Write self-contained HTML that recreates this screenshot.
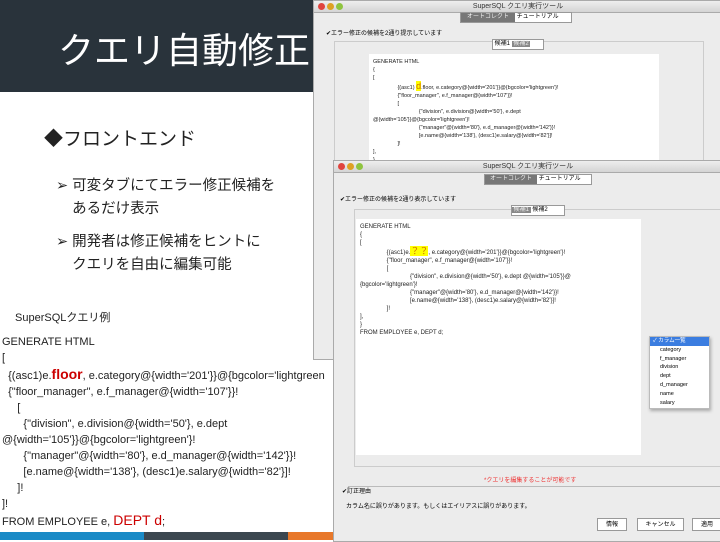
<!DOCTYPE html>
<html><head><meta charset="utf-8"><style>
*{margin:0;padding:0;box-sizing:border-box}
body{width:720px;height:540px;position:relative;overflow:hidden;background:#fff;font-family:"Liberation Sans","Noto Sans CJK JP",sans-serif}
.a{position:absolute}
.hdr{left:0;top:0;width:720px;height:92px;background:#29333b}
.t{color:#fff;font-size:36px;left:58px;top:22px;white-space:nowrap}
.code{font-size:11px;color:#222;line-height:16px;white-space:pre}
.win{background:#ececec;border:1px solid #aaa}
.tb{height:12px;background:linear-gradient(#eee,#d4d4d4);border-bottom:1px solid #aaa;font-size:7px;text-align:center;color:#333;line-height:12px;position:relative}
.dot{position:absolute;top:2px;width:7px;height:7px;border-radius:50%}
.sc{font-size:5.5px;line-height:8px;white-space:pre;color:#222}
.btn{position:absolute;background:#fff;border:1px solid #999;font-size:6px;text-align:center;line-height:12px;height:13px}
.tab{white-space:nowrap;overflow:hidden}
</style></head><body>
<div class="a hdr"></div>
<div class="a t">クエリ自動修正</div>
<div class="a" style="left:44px;top:124px;font-size:19px;color:#222">◆フロントエンド</div>
<div class="a" style="left:56px;top:175px;font-size:14.5px;color:#222;line-height:23px">➢ 可変タブにてエラー修正候補を<br>&nbsp;&nbsp;&nbsp;&nbsp;あるだけ表示</div>
<div class="a" style="left:56px;top:231px;font-size:14.5px;color:#222;line-height:23px">➢ 開発者は修正候補をヒントに<br>&nbsp;&nbsp;&nbsp;&nbsp;クエリを自由に編集可能</div>
<div class="a" style="left:15px;top:309px;font-size:11px;color:#222">SuperSQLクエリ例</div>
<div class="a code" style="left:2px;top:334px">GENERATE HTML
[
  {(asc1)e.<b style="color:#c00;font-size:14px">floor</b>, e.category@{width='201'}}@{bgcolor='lightgreen
  {"floor_manager", e.f_manager@{width='107'}}!
     [
       {"division", e.division@{width='50'}, e.dept
@{width='105'}}@{bgcolor='lightgreen'}!
       {"manager"@{width='80'}, e.d_manager@{width='142'}}!
       [e.name@{width='138'}, (desc1)e.salary@{width='82'}]!
     ]!
]!
FROM EMPLOYEE e, <span style="color:#c00;font-size:14px">DEPT d</span>;</div>
<div class="a" style="left:0;top:532px;width:144px;height:8px;background:#1a8ac6"></div>
<div class="a" style="left:144px;top:532px;width:144px;height:8px;background:#3c4750"></div>
<div class="a" style="left:288px;top:532px;width:45px;height:8px;background:#e8782a"></div>

<div class="a win" style="left:313px;top:0;width:410px;height:360px">
<div class="tb"><span class="dot" style="left:4px;background:#e0443e"></span><span class="dot" style="left:13px;background:#dea123"></span><span class="dot" style="left:22px;background:#8fc43f"></span>SuperSQL クエリ実行ツール</div>
<div class="a tab" style="left:146px;top:11px;width:112px;height:11px;border:1px solid #999;font-size:6px;line-height:9px;background:#fff"><span style="background:#777;color:#eee;display:inline-block;width:54px;text-align:center">オートコレクト</span> チュートリアル</div>
<div class="a" style="left:12px;top:27px;font-size:6px">✔エラー修正の候補を2通り提示しています</div>
<div class="a" style="left:20px;top:40px;width:370px;height:310px;border:1px solid #ccc"></div>
<div class="a tab" style="left:178px;top:38px;width:52px;height:11px;border:1px solid #999;font-size:6px;background:#fff;line-height:9px">&nbsp;候補1 <span style="background:#888;color:#eee">&nbsp;候補2&nbsp;</span></div>
<div class="a sc" style="left:55px;top:53px;width:290px;height:112px;background:#fff;padding:4px">GENERATE HTML
{
[
                {(asc1) <span style="background:#ff0;color:#c60;font-size:9px">d</span>.floor, e.category@{width='201'}}@{bgcolor='lightgreen'}!
                {"floor_manager", e.f_manager@{width='107'}}!
                [
                              {"division", e.division@{width='50'}, e.dept
@{width='105'}}@{bgcolor='lightgreen'}!
                              {"manager"@{width='80'}, e.d_manager@{width='142'}}!
                              [e.name@{width='138'}, (desc1)e.salary@{width='82'}]!
                ]!
],
}</div>
</div>

<div class="a win" style="left:333px;top:160px;width:390px;height:382px">
<div class="tb"><span class="dot" style="left:4px;background:#e0443e"></span><span class="dot" style="left:13px;background:#dea123"></span><span class="dot" style="left:22px;background:#8fc43f"></span>SuperSQL クエリ実行ツール</div>
<div class="a tab" style="left:150px;top:13px;width:108px;height:11px;border:1px solid #999;font-size:6px;line-height:9px;background:#fff"><span style="background:#777;color:#eee;display:inline-block;width:52px;text-align:center">オートコレクト</span> チュートリアル</div>
<div class="a" style="left:6px;top:33px;font-size:6px">✔エラー修正の候補を2通り表示しています</div>
<div class="a" style="left:20px;top:48px;width:370px;height:258px;border:1px solid #ccc"></div>
<div class="a tab" style="left:177px;top:44px;width:54px;height:11px;border:1px solid #999;font-size:6px;background:#fff;line-height:9px"><span style="background:#888;color:#eee">&nbsp;候補1&nbsp;</span> 候補2</div>
<div class="a sc" style="left:22px;top:58px;width:285px;height:236px;background:#fff;padding:4px;font-size:6px">GENERATE HTML
{
[
                {(asc1)e.<span style="background:#ff0;color:#c60;font-size:9px">？？</span>, e.category@{width='201'}}@{bgcolor='lightgreen'}!
                {"floor_manager", e.f_manager@{width='107'}}!
                [
                              {"division", e.division@{width='50'}, e.dept @{width='105'}}@
{bgcolor='lightgreen'}!
                              {"manager"@{width='80'}, e.d_manager@{width='142'}}!
                              [e.name@{width='138'}, (desc1)e.salary@{width='82'}]!
                ]!
],
}
FROM EMPLOYEE e, DEPT d;</div>
<div class="a" style="left:315px;top:175px;width:61px;height:73px;background:#fff;border:1px solid #bbb;font-size:5.5px;line-height:8.8px;padding-left:10px;box-shadow:1px 2px 3px #aaa"><div style="background:#3b7de0;color:#fff;margin-left:-10px;padding-left:3px">✓ カラム一覧</div>category<br>f_manager<br>division<br>dept<br>d_manager<br>name<br>salary</div>
<div class="a" style="left:150px;top:314px;font-size:6px;color:#e33">*クエリを編集することが可能です</div>
<div class="a" style="left:14px;top:325px;width:380px;border-top:1px solid #bbb"></div>
<div class="a" style="left:8px;top:325px;font-size:6px">✔訂正理由</div>
<div class="a" style="left:12px;top:340px;font-size:6px">カラム名に誤りがあります。もしくはエイリアスに誤りがあります。</div>
<div class="btn" style="left:263px;top:357px;width:30px">情報</div>
<div class="btn" style="left:303px;top:357px;width:47px">キャンセル</div>
<div class="btn" style="left:358px;top:357px;width:30px">適用</div>
</div>
</body></html>
